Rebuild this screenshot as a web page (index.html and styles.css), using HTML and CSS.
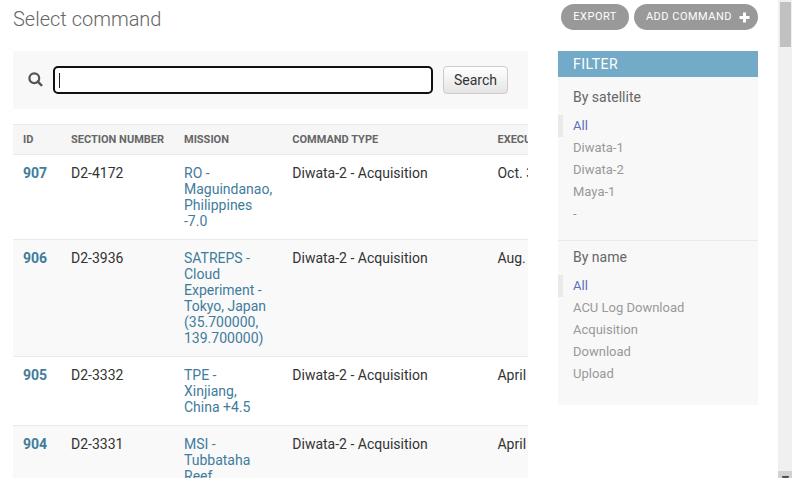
FILE: index.html
```html
<!DOCTYPE html>
<html lang="en">
<head>
<meta charset="utf-8">
<title>Select command</title>
<link rel="stylesheet" href="styles.css">
</head>
<body>
<div class="page">
  <main class="content">
    <header class="heading">
      <h1>Select command</h1>
      <div class="tools">
        <a class="tool">Export</a>
        <a class="tool tool-add">Add command
          <svg width="11" height="11" viewBox="0 0 11 11"><path d="M4 .5h3V4h3.5v3H7v3.500H4V7H.5V4H4z" fill="#fff"/></svg>
        </a>
      </div>
    </header>
    <div class="columns">
      <section class="results">
        <form class="search">
          <svg class="search-icon" width="15" height="15" viewBox="0 0 15 15" fill="none" stroke="#555"><circle cx="6.3" cy="6.2" r="4.9" stroke-width="2.2"/><path d="M9.8 9.7l3.500 3.500" stroke-width="2.5" stroke-linecap="round"/></svg>
          <div class="field"><span class="caret"></span></div>
          <button class="submit" type="button">Search</button>
        </form>
        <table>
          <colgroup><col class="c-id"><col class="c-section"><col class="c-mission"><col class="c-type"><col class="c-time"></colgroup>
          <thead>
            <tr><th>ID</th><th>Section number</th><th>Mission</th><th>Command type</th><th>Execution time</th></tr>
          </thead>
          <tbody>
            <tr><td class="id">907</td><td>D2-4172</td><td class="mission">RO -<br>Maguindanao,<br>Philippines<br>-7.0</td><td>Diwata-2 - Acquisition</td><td>Oct. 3</td></tr>
            <tr><td class="id">906</td><td>D2-3936</td><td class="mission">SATREPS -<br>Cloud<br>Experiment -<br>Tokyo, Japan<br>(35.700000,<br>139.700000)</td><td>Diwata-2 - Acquisition</td><td>Aug.</td></tr>
            <tr><td class="id">905</td><td>D2-3332</td><td class="mission">TPE -<br>Xinjiang,<br>China +4.5</td><td>Diwata-2 - Acquisition</td><td>April</td></tr>
            <tr><td class="id">904</td><td>D2-3331</td><td class="mission">MSI -<br>Tubbataha<br>Reef</td><td>Diwata-2 - Acquisition</td><td>April</td></tr>
          </tbody>
        </table>
      </section>
      <aside class="filter">
        <h2>Filter</h2>
        <h3>By satellite</h3>
        <ul>
          <li class="selected">All</li><li>Diwata-1</li><li>Diwata-2</li><li>Maya-1</li><li>-</li>
        </ul>
        <h3>By name</h3>
        <ul>
          <li class="selected">All</li><li>ACU Log Download</li><li>Acquisition</li><li>Download</li><li>Upload</li>
        </ul>
      </aside>
    </div>
  </main>
  <div class="scrollbar">
    <div class="thumb"></div>
    <div class="down"><svg width="14" height="7" viewBox="0 0 14 7"><path d="M4 5h7v1l-1 1H5L4 6z" fill="#505050"/></svg></div>
  </div>
</div>
</body>
</html>
```
FILE: styles.css
```css
* { box-sizing: border-box; }
body {
  margin: 0;
  overflow: hidden;
  background: #fff;
  color: #333;
  font: 14px/16px Roboto, "Liberation Sans", sans-serif;
}
.page { display: flex; height: 478px; overflow: hidden; }
.content { flex: 1; padding: 4px 20px 0 13px; min-width: 0; }
.heading { display: flex; justify-content: space-between; height: 47px; }
h1 { margin: 3px 0 0; font-size: 20px; line-height: 24px; font-weight: 300; color: #666; }
.tools { display: flex; gap: 5px; }
.tool {
  height: 26px;
  padding: 0 12px;
  border-radius: 15px;
  background: #999;
  color: #fff;
  font-size: 11px;
  line-height: 25px;
  letter-spacing: 0.5px;
  text-transform: uppercase;
  white-space: nowrap;
}
.tool-add { display: flex; align-items: flex-start; gap: 7px; padding-right: 8px; }
.tool-add svg { margin-top: 8px; }
.columns { display: flex; align-items: flex-start; justify-content: space-between; }
.results { width: 515px; overflow: hidden; }
.search {
  display: flex;
  align-items: center;
  height: 58px;
  margin-bottom: 15px;
  padding: 0 15px;
  background: #f8f8f8;
}
.search-icon { margin: 0 10px 2px 0; }
.field {
  width: 380px;
  height: 28px;
  margin-right: 10px;
  padding: 5px 4px;
  border: 2px solid #101010;
  border-radius: 5px;
  background: #fff;
}
.caret { display: block; width: 1px; height: 15px; background: #222; }
.submit {
  width: 65px;
  height: 28px;
  padding: 0;
  border: 1px solid #ccc;
  border-radius: 4px;
  background: linear-gradient(#fff, #e4e4e4);
  color: #333;
  font: inherit;
}
table { width: 605px; table-layout: fixed; border-collapse: separate; border-spacing: 0; }
.c-id { width: 48px; }
.c-section { width: 113px; }
.c-mission { width: 108.3px; }
.c-type { width: 205.2px; }
.c-time { width: 130.5px; }
th {
  height: 31px;
  padding: 0 10px;
  border-top: 1px solid #eaeaea;
  border-bottom: 1px solid #eaeaea;
  background: #f6f6f6;
  color: #666;
  font-size: 11px;
  font-weight: 700;
  text-align: left;
  text-transform: uppercase;
  white-space: nowrap;
}
td { padding: 10px; border-bottom: 1px solid #eaeaea; vertical-align: top; white-space: nowrap; }
tbody tr:nth-child(even) { background: #f9f9f9; }
.id { color: #417c9c; font-weight: 700; }
.mission { color: #417c9c; }
.filter { width: 200px; height: 354px; background: #f8f8f8; }
h2 {
  height: 26px;
  margin: 0;
  padding: 0 15px;
  background: #72aac8;
  color: #fff;
  font-size: 14px;
  line-height: 26px;
  font-weight: 400;
  letter-spacing: 0.5px;
  text-transform: uppercase;
}
h3 { margin: 0; padding: 12px 15px 10px; color: #666; font-size: 14px; line-height: 16px; font-weight: 400; }
.filter ul { margin: 0; padding: 0 0 15px; border-bottom: 1px solid #eaeaea; list-style: none; }
.filter ul + h3 { padding-top: 8px; }
.filter ul:last-child { border-bottom: 0; }
.filter li { height: 22px; padding-left: 15px; color: #999; font-size: 13px; line-height: 22px; }
.filter .selected { padding-left: 10px; border-left: 5px solid #eaeaea; color: #5b6fb8; }
.scrollbar { display: flex; flex-direction: column; width: 14px; padding-top: 2px; background: #f0f0f0; }
.thumb { width: 11px; height: 45px; margin-left: 2px; background: #c1c1c1; }
.down { height: 7px; margin-top: auto; background: #d2d2d2; }
.down svg { display: block; }
```
